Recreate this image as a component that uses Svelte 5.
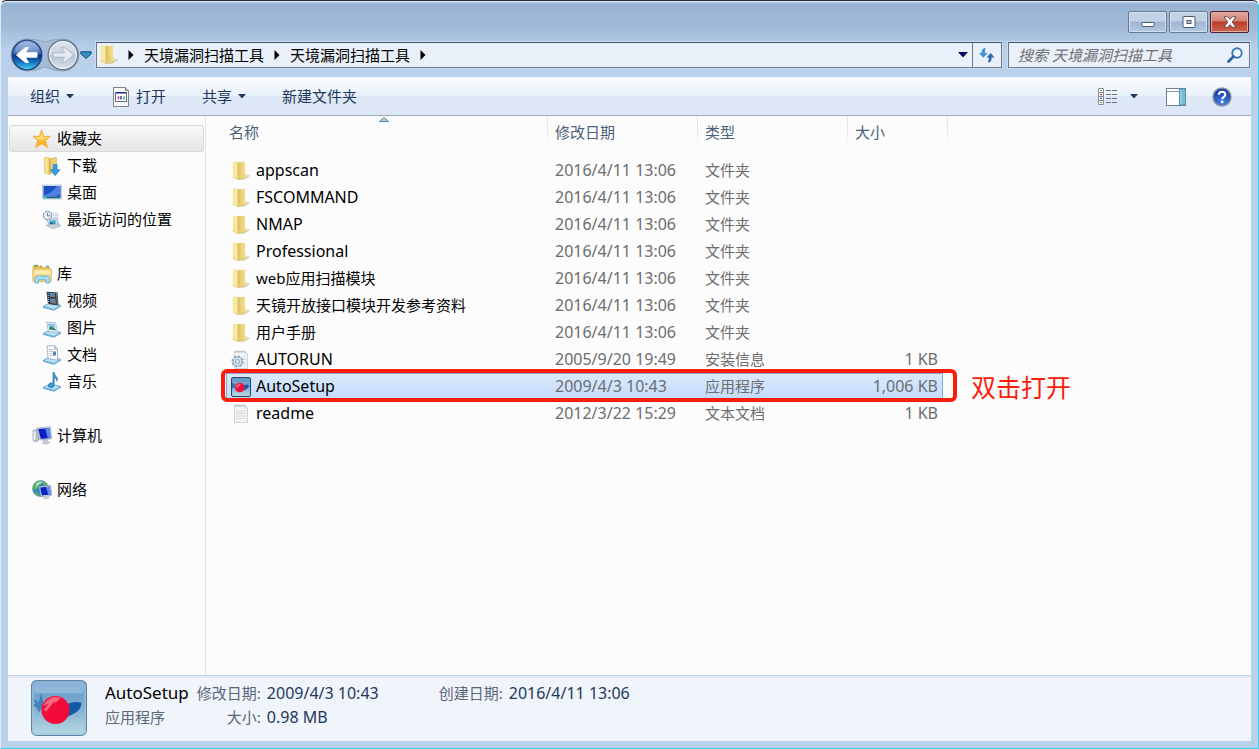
<script>
  const crumbs = ['天境漏洞扫描工具', '天境漏洞扫描工具'];

  const groups = [
    {
      label: '收藏夹', icon: 'star', active: true,
      items: [
        { label: '下载', icon: 'download' },
        { label: '桌面', icon: 'desktop' },
        { label: '最近访问的位置', icon: 'recent' }
      ]
    },
    {
      label: '库', icon: 'library',
      items: [
        { label: '视频', icon: 'video' },
        { label: '图片', icon: 'picture' },
        { label: '文档', icon: 'document' },
        { label: '音乐', icon: 'music' }
      ]
    },
    { label: '计算机', icon: 'computer', items: [] },
    { label: '网络', icon: 'network', items: [] }
  ];

  const folder = (name) => ({ name, icon: 'folder', date: '2016/4/11 13:06', type: '文件夹', size: '' });

  const files = [
    folder('appscan'),
    folder('FSCOMMAND'),
    folder('NMAP'),
    folder('Professional'),
    folder('web应用扫描模块'),
    folder('天镜开放接口模块开发参考资料'),
    folder('用户手册'),
    { name: 'AUTORUN', icon: 'config', date: '2005/9/20 19:49', type: '安装信息', size: '1 KB' },
    { name: 'AutoSetup', icon: 'app', date: '2009/4/3 10:43', type: '应用程序', size: '1,006 KB', note: '双击打开' },
    { name: 'readme', icon: 'text', date: '2012/3/22 15:29', type: '文本文档', size: '1 KB' }
  ];

  const isLatin = (text) => /^[\x20-\x7e]+$/.test(text);

  let selected = $state('AutoSetup');
  let query = $state('');
</script>

{#snippet base()}
  <path d="M1 15.500l7-3.500 11 2.500-7 4z" fill="#b9e0f2" stroke="#4f9cc8" stroke-width=".8" />
  <path d="M1 15.800v1l11 3 7-4.300v-1l-7 4.200z" fill="#5ba6cf" />
{/snippet}

{#snippet monitor()}
  <path d="M5 2 18.500.8 19.500 12.800 8 14z" fill="#d5dbe3" stroke="#8a93a3" stroke-width=".6" />
  <path d="M6.200 2.900 17.700 1.900 18.500 11.900 8.800 12.900z" fill="#0a1ec2" />
  <path d="M13 2.300 17.700 1.900 18.500 11.900 15.800 12.200z" fill="#5c86ee" />
  <path d="M11 14l4-.6 1 2.300 2 .8-3 1.800-5-.8 1.700-1.400z" fill="#c2c8d0" stroke="#a1a8b2" stroke-width=".4" />
{/snippet}

{#snippet icon(name)}
  <svg class="icon" viewBox="0 0 20 20" aria-hidden="true">
    {#if name === 'folder'}
      <path d="M8 18.500l6-4 4.500-.5q.5 1.500-1.500 2.500l-5 2.500z" fill="#a9abb3" opacity=".5" />
      <path d="M6 1.300 14 .8V13l1.800.6v2.700L7.500 18.800z" fill="url(#leaf)" />
      <path d="M1.800 1.300Q3 .2 4.500.2L7 1.500v17.300L2.300 16.500q-.5-.3-.5-.8z" fill="#f7e8a0" />
      <path d="M7 2v16.500" stroke="#d3b75d" stroke-width=".8" opacity=".8" />
      <path d="M2.200 15.500v.8L7 18.700l8.500-2.500" fill="none" stroke="#dfc15a" stroke-width=".7" />
    {:else if name === 'star'}
      <path d="M9.500 1 12 7.500 18.500 7.200 13.600 11.600 15.500 18.800 9.700 14.800 3.600 18.600 5.600 11.400 1 7.200 7.500 7.200z" fill="#fdb72f" stroke="#f0a030" stroke-width=".7" stroke-linejoin="round" />
      <path d="M9.500 2.500 11.300 8.500 17 8 11.500 10.500 6 10.500 3 8 8 8.300z" fill="#ffe68a" opacity=".8" />
    {:else if name === 'download'}
      <path d="M2 2 6.500 1l1 2v15.500l-5-1.500z" fill="#f6e294" stroke="#d9bf64" stroke-width=".6" />
      <path d="M7 2.500l7.500-1V15L7 18.500z" fill="#eccf70" stroke="#d3b65c" stroke-width=".6" />
      <path d="M8 3v14.500" stroke="#c7a94f" stroke-width="1.200" />
      <path d="M11.300 8.500h3.800v5.200h2.900l-4.800 6-4.800-6h2.900z" fill="#319ee6" stroke="#1877bd" stroke-width=".6" />
    {:else if name === 'desktop'}
      <rect x=".6" y="2" width="18.800" height="14" fill="#d9e6f1" stroke="#a9bfd3" stroke-width=".7" />
      <rect x="1.500" y="3" width="17" height="10.800" fill="#1d4ec6" />
      <path d="M1.500 12.500Q10 10 15 3h3.500v8L12 13.800H1.500z" fill="#5f93ea" opacity=".75" />
      <rect x="1.500" y="13.800" width="17" height="1.500" fill="#1b6783" />
      <rect x="1.500" y="13.200" width="3" height="2" fill="#43c6a9" />
    {:else if name === 'recent'}
      <path d="M9 3l7 .8-.5 9L9 12z" fill="#f3f5f7" stroke="#aab2bd" stroke-width=".6" />
      <path d="M11 5.500l4 .4M11 7.500l4 .4" stroke="#9dafc1" stroke-width=".6" />
      <circle cx="5.500" cy="5.500" r="4.200" fill="#e5eef5" stroke="#8495a6" stroke-width="1" />
      <path d="M5.500 3v2.800H8" fill="none" stroke="#4a6277" stroke-width=".8" />
      <path d="M5 9.500l9.500-.5 2 5-9.500.8z" fill="#f5fbff" stroke="#7c99b2" stroke-width=".7" />
      <path d="M6.500 10.500 13.500 10l1.200 3-7 .8z" fill="#59b4dc" />
      <path d="M7 14l2.500-2 5 1.500-6.500.5z" fill="#255f98" />
      <path d="M4 15.200 17 14l2 1.800-8 3.200z" fill="#cbd2d9" stroke="#9aa4ae" stroke-width=".6" />
    {:else if name === 'library'}
      <path d="M1 3q0-1 1-1h5l1 1.300h9.500v14H1z" fill="#e8c45c" stroke="#c79f3e" stroke-width=".6" />
      <path d="M2 1.600h4" stroke="#3db04b" stroke-width="1.400" />
      <path d="M7.500 2.200h4" stroke="#f2f2ea" stroke-width="1.300" />
      <path d="M8 2.400h1.500" stroke="#d84f3a" stroke-width="1.300" />
      <path d="M14 2.200h3" stroke="#4aa0e2" stroke-width="1.300" />
      <path d="M1 5h18.500v12.500H1z" fill="#f7dc83" stroke="#d7b352" stroke-width=".6" />
      <path d="M2 6.500h16.500v3.500H2z" fill="#fceeb5" opacity=".8" />
      <path d="M3 19v-4.500q0-2.500 2.500-2.500h9.500q2.500 0 2.500 2.500V19h-3.500v-3.200H6.500V19z" fill="#a7def4" stroke="#57a8cf" stroke-width=".8" />
    {:else if name === 'video'}
      {@render base()}
      <path d="M4.500.8 15.500 1.500 16.500 14.500 6 13z" fill="#28343e" />
      <path d="M7.500 1.800 13 2.200 13.300 6.200 7.700 5.800zM7.900 7.200 13.500 7.700 14 12.700 8.400 12z" fill="#4d8ec0" />
      <path d="M9 5.800l2-2 2.200 2.400zM9 11.800l2-2.800 2.600 3.500z" fill="#c85f38" />
      <path d="M6 2 6.700 12.500M14.500 2.500l.9 11" stroke="#dbe3e9" stroke-width=".9" stroke-dasharray="1 1" />
    {:else if name === 'picture'}
      {@render base()}
      <path d="M4.500 4 13.500 4.800 15.500 14.500 6.500 13.500z" fill="#f7fbfd" stroke="#91a6b8" stroke-width=".7" />
      <path d="M6 5.500 12.600 6.100 13.800 12.400 7.400 11.600z" fill="#7cc2e6" />
      <path d="M7 9.500l2.500-1 3.800 2.800.5 1.100-6.400-.8z" fill="#3e8468" />
    {:else if name === 'document'}
      {@render base()}
      <path d="M5 .8h7.500L15.500 4v11.200L6 13.500z" fill="#fafcfe" stroke="#8d99ac" stroke-width=".7" />
      <path d="M12.500.8v3.500h3z" fill="#cdd6e1" stroke="#8d99ac" stroke-width=".5" />
      <path d="M7 4.500h4M7 6.500h7M7.500 8.500h3M7.500 10.500h3" stroke="#9ba9bf" stroke-width=".7" />
      <rect x="11" y="7" width="3" height="3.500" fill="#557fba" />
    {:else if name === 'music'}
      {@render base()}
      <path d="M11 .5h1.200q.3 2.800 2.500 4.500 1.500 1.600.2 4.300.2-2.500-2.700-3.700V12.500q-.2 3.300-3.300 3.300-2.900-.2-2.600-2.800.7-2.500 4.700-2.200z" fill="#3a9bd3" stroke="#1f6da6" stroke-width=".6" />
    {:else if name === 'computer'}
      <path d="M1 4.500 5 3.500 7 14 3.500 16 1 14.500z" fill="#b9c0ca" stroke="#818b99" stroke-width=".6" />
      <path d="M1.500 5.500l2-.4v9.500l-2-.6z" fill="#eef1f5" />
      {@render monitor()}
    {:else if name === 'network'}
      <circle cx="8.500" cy="8.500" r="8" fill="#2f88c8" stroke="#4f8aa7" stroke-width=".5" />
      <path d="M2 5Q5 0 10 .8L8.500 4 6 5l-.5 3L3 10.500.8 8.500zM11 1.500l3.500 1.500 1.500 3-4-.5zM3 12l3.500 1 1 3.200Q4 15.500 3 12z" fill="#62b846" />
      <path d="M4 3.500Q8 .5 12 2 7 3.500 4.500 8z" fill="#e4f8e7" opacity=".6" />
      <path d="M7 6.500 18.800 5.500 19.700 15.500 9 16.800z" fill="#d9dee5" stroke="#8792a3" stroke-width=".6" />
      <path d="M8.100 7.500 17.900 6.600 18.600 14.500 9.800 15.600z" fill="#0d22bf" />
      <path d="M14 7l3.900-.4.700 7.900-2.300.3z" fill="#608cef" />
      <path d="M12.500 16.500l3.500-.5 2 2-4 1.500-3.500-.8z" fill="#c9ced5" />
    {:else if name === 'config' || name === 'text'}
      <path d="M3.500 1.500h10.800L16.500 4v14.500h-13z" fill="#f1f3f5" stroke="#c3c9cf" stroke-width=".8" />
      <path d="M4.500.5v2.500M6.700.5v2.500M8.900.5v2.500M11.100.5v2.500M13.300.5v2.500" stroke="#b1b7be" stroke-width=".9" />
      <path d="M14 1.800v2.700h2.500z" fill="#d5dbe1" />
      <path d="M5 7h10M5 9.500h10M5 12h10M5 14.500h10" stroke="#d5dfe6" stroke-width="1" />
      {#if name === 'config'}
        <circle cx="6.500" cy="11.500" r="4.500" fill="#dce9f3" stroke="#86a6c1" stroke-width="1.200" />
        <circle cx="6.500" cy="11.500" r="5.400" fill="none" stroke="#86a6c1" stroke-width="1.400" stroke-dasharray="2 2.240" />
        <circle cx="6.500" cy="11.500" r="2" fill="#fff" stroke="#7595b0" stroke-width="1" />
      {/if}
    {:else if name === 'app'}
      <rect x=".5" y=".5" width="19" height="19" rx="1.500" fill="url(#appfill)" stroke="#2b4460" />
      <path d="M1 6l3 1.200L3.500 10l1.500 1.500L1 11z" fill="#2a5fa2" opacity=".8" />
      <path d="M12 9Q15.500 6.500 18 8.500q0 2.500-5 5z" fill="#175ba4" />
      <circle cx="8.800" cy="10.500" r="4.800" fill="#f2103b" />
      <path d="M5 9l3-2.500 2 .5-4 4.500z" fill="#f58397" opacity=".75" />
    {/if}
  </svg>
{/snippet}

{#snippet caret()}
  <svg class="caret" viewBox="0 0 8 5" aria-hidden="true"><path d="M0 0h8L4 4.500z" fill="currentColor" /></svg>
{/snippet}

{#snippet next()}
  <svg class="next" viewBox="0 0 6 10" aria-hidden="true"><path d="M.5 0v10L5.500 5z" fill="#000" /></svg>
{/snippet}

<svg class="defs" aria-hidden="true">
  <defs>
    <linearGradient id="leaf" x1="0" y1="0" x2="1" y2="0">
      <stop offset="0" stop-color="#d2b65c" /><stop offset=".45" stop-color="#ecd47c" /><stop offset="1" stop-color="#f5e08c" />
    </linearGradient>
    <linearGradient id="appfill" x1="0" y1="0" x2="0" y2="1">
      <stop offset="0" stop-color="#5f95c8" /><stop offset=".5" stop-color="#82aed0" /><stop offset="1" stop-color="#b9dbe4" />
    </linearGradient>
    <linearGradient id="backfill" x1="0" y1="0" x2="0" y2="1">
      <stop offset="0" stop-color="#8fb0e2" /><stop offset=".46" stop-color="#3a66b8" />
      <stop offset=".5" stop-color="#0b2f83" /><stop offset=".75" stop-color="#1774c0" /><stop offset="1" stop-color="#45d9f6" />
    </linearGradient>
    <linearGradient id="fwdfill" x1="0" y1="0" x2="0" y2="1">
      <stop offset="0" stop-color="#dfe6ee" /><stop offset=".48" stop-color="#c9d3df" />
      <stop offset=".52" stop-color="#b7c4d4" /><stop offset="1" stop-color="#dbe4ee" />
    </linearGradient>
    <radialGradient id="helpfill" cx=".5" cy=".85" r=".8">
      <stop offset="0" stop-color="#4a86ea" /><stop offset="1" stop-color="#16339f" />
    </radialGradient>
  </defs>
</svg>

<div class="window">
  <header class="caption">
    <button class="win" aria-label="最小化">
      <svg viewBox="0 0 14 12"><rect x="1" y="6.500" width="12" height="4" rx=".5" fill="#fff" stroke="#4f5d6f" /></svg>
    </button>
    <button class="win" aria-label="最大化">
      <svg viewBox="0 0 14 12"><rect x="1" y=".5" width="12" height="11" rx=".5" fill="#fff" stroke="#4f5d6f" /><rect x="5" y="4.500" width="4" height="3" fill="#b5c6da" stroke="#4f5d6f" /></svg>
    </button>
    <button class="win close" aria-label="关闭">
      <svg viewBox="0 0 14 12"><path d="M1 .8h3.800L7 3.300 9.200.8H13L9.200 6l3.800 5.200H9.200L7 8.700l-2.200 2.500H1L4.800 6z" fill="#fff" stroke="#5a4048" stroke-width=".9" /></svg>
    </button>
  </header>

  <nav class="navbar" aria-label="导航">
    <div class="travel">
      <svg class="pill" viewBox="0 0 70 34" aria-hidden="true">
        <path d="M17 1Q26 1 35 4 44 1 53 1a16 16 0 0 1 0 32Q44 33 35 29 26 33 17 33A16 16 0 0 1 17 1z" fill="#a4bcd8" stroke="#8ba5c2" />
      </svg>
      <button class="round" aria-label="后退">
        <svg viewBox="0 0 32 32">
          <circle cx="16" cy="16" r="14.800" fill="url(#backfill)" stroke="#22427c" stroke-width="1.300" />
          <path d="M4 13Q5 3 16 3t12 10Q16 18 4 13z" fill="#fff" opacity=".22" />
          <path d="M5.500 16 14.500 8.500h3L14.300 13.800H26v4.400H14.300l3.200 5.300h-3z" fill="#fff" stroke="#fff" stroke-width="1" stroke-linejoin="round" />
        </svg>
      </button>
      <button class="round" aria-label="前进">
        <svg viewBox="0 0 32 32">
          <circle cx="16" cy="16" r="14.800" fill="url(#fwdfill)" stroke="#6d7a8a" stroke-width="1.400" />
          <circle cx="16" cy="16" r="13.500" fill="none" stroke="#f0f5fa" />
          <path d="M26.500 16 17.500 8.500h-3l3.200 5.300H6v4.400h11.700l-3.200 5.300h3z" fill="#e6ebf1" stroke="#a5b0bd" stroke-width=".8" stroke-linejoin="round" />
        </svg>
      </button>
    </div>
    <button class="history" aria-label="最近浏览的页面">
      <svg viewBox="0 0 12 8"><path d="M.8.800h10.400v2L6 7.400.8 2.800z" fill="#2c90c4" stroke="#1b4b75" /></svg>
    </button>

    <div class="address">
      {@render icon('folder')}
      {@render next()}
      {#each crumbs as crumb}
        <button class="crumb">{crumb}</button>
        {@render next()}
      {/each}
      <button class="drop" aria-label="以前的位置">
        <svg viewBox="0 0 10 6"><path d="M0 0h10L5 5.500z" fill="#000a62" /></svg>
      </button>
      <button class="refresh" aria-label="刷新">
        <svg viewBox="0 0 18 16">
          <path d="M6.500 1Q3.600 2 3.600 6H1l4.300 4.800L9.500 6H6.800q-.2-3 1-4.700z" fill="#3b91d8" />
          <path d="M11 15.500q2.600-.5 2.600-5h2.800L12.700 6 8.500 10.500h2.400q.2 3-1 4.600z" fill="#2b67b4" />
        </svg>
      </button>
    </div>

    <label class="search">
      <input type="text" aria-label="搜索" placeholder="搜索 天境漏洞扫描工具" bind:value={query} />
      <svg viewBox="0 0 16 16" aria-hidden="true">
        <circle cx="10" cy="6" r="4.700" fill="#f0f7fd" stroke="#3578bb" stroke-width="1.900" />
        <path d="M6.500 9.500 1.500 14.500" stroke="#2b5d9c" stroke-width="2.600" stroke-linecap="round" />
      </svg>
    </label>
  </nav>

  <div class="client">
    <div class="toolbar" role="toolbar" aria-label="命令栏">
      <button class="cmd">组织 {@render caret()}</button>
      <button class="cmd open">
        <svg class="sheet" viewBox="0 0 18 20" aria-hidden="true">
          <path d="M1.500.500h12L16.500 3.500v16h-15z" fill="#f7f8fa" stroke="#7d838b" />
          <path d="M13.500.500v3h3" fill="#d3d8df" stroke="#7d838b" />
          <rect x="3.500" y="5.500" width="11" height="9" fill="#fff" stroke="#67707c" />
          <rect x="4" y="5" width="10" height="1.500" fill="#1d2b9a" />
          <path d="M6.500 9.500v3M5.500 10h2" stroke="#c0325a" stroke-width="1.200" />
          <path d="M9 9v3.500" stroke="#3c46c0" stroke-width="1.600" />
          <path d="M12 9.500v3" stroke="#2a9a58" stroke-width="1.400" />
        </svg>
        打开
      </button>
      <button class="cmd share">共享 {@render caret()}</button>
      <button class="cmd">新建文件夹</button>
      <div class="tools">
        <button class="tool" aria-label="更改您的视图">
          <svg width="20" height="18" viewBox="0 0 20 18">
            <path d="M.5.500h5v4h-5zM.5 4.500h5v4h-5zM.5 8.500h5v4h-5zM.5 12.500h5v4h-5z" fill="#fff" stroke="#848e9b" />
            <path d="M2 2.500h2" stroke="#4e9f63" /><path d="M2 6.500h2" stroke="#e0432f" stroke-width="1.500" />
            <path d="M2 10.500h2" stroke="#3575c4" stroke-width="1.500" /><path d="M2 14.500h2" stroke="#8ab52c" stroke-width="1.500" />
            <path d="M8 2.500h5M14 2.500h5M8 6.500h5M14 6.500h5M8 10.500h5M14 10.500h5M8 14.500h5M14 14.500h5" stroke="#68727e" />
          </svg>
        </button>
        <button class="tool more" aria-label="更多选项">{@render caret()}</button>
        <button class="tool pane" aria-label="显示预览窗格">
          <svg width="20" height="18" viewBox="0 0 20 18">
            <rect x=".5" y=".5" width="19" height="17" fill="#fff" stroke="#6d8096" />
            <path d="M1 3.500h13" stroke="#8598ab" />
            <rect x="13.500" y="1" width="6" height="16" fill="#78bdd8" stroke="#4f93b5" />
            <path d="M15 2v14" stroke="#a9dbec" />
          </svg>
        </button>
        <button class="tool" aria-label="获取帮助">
          <svg width="20" height="20" viewBox="0 0 20 20">
            <circle cx="10" cy="10" r="9" fill="url(#helpfill)" stroke="#8b93a3" stroke-width="1.500" />
            <path d="M6.800 7.800Q6.900 4.800 10 4.700q3.300.1 3.300 2.800 0 1.500-1.500 2.500-1.500.9-1.500 2.200" fill="none" stroke="#fff" stroke-width="2.100" />
            <circle cx="10.200" cy="14.900" r="1.300" fill="#fff" />
          </svg>
        </button>
      </div>
    </div>

    <div class="body">
      <aside class="tree">
        {#each groups as group}
          <ul>
            <li><a href="#top" class="node" class:active={group.active}>{@render icon(group.icon)}{group.label}</a></li>
            {#each group.items as item}
              <li><a href="#top" class="node child">{@render icon(item.icon)}{item.label}</a></li>
            {/each}
          </ul>
        {/each}
      </aside>

      <main class="list">
        <table>
          <colgroup><col class="c-name" /><col class="c-date" /><col class="c-type" /><col class="c-size" /></colgroup>
          <thead>
            <tr>
              <th>
                <button class="head">名称</button>
                <svg class="sort" viewBox="0 0 10 5" aria-hidden="true"><path d="M.5 4.500 5 .500l4.500 4z" fill="#a6d3ea" stroke="#3f6e90" stroke-width=".8" /></svg>
              </th>
              <th><button class="head">修改日期</button></th>
              <th><button class="head">类型</button></th>
              <th><button class="head last">大小</button></th>
            </tr>
          </thead>
          <tbody>
            {#each files as file}
              <tr class:selected={selected === file.name} onclick={() => (selected = file.name)}>
                <td class="name" class:latin={isLatin(file.name)}><span>{@render icon(file.icon)}{file.name}</span></td>
                <td class="latin">{file.date}</td>
                <td>{file.type}</td>
                <td class="size latin">
                  {file.size}
                  {#if file.note}
                    <span class="mark"><em>{file.note}</em></span>
                  {/if}
                </td>
              </tr>
            {/each}
          </tbody>
        </table>
      </main>
    </div>

    <footer class="details">
      <svg class="big" viewBox="0 0 56 56" aria-hidden="true">
        <rect x=".5" y=".5" width="55" height="55" rx="5" fill="url(#appfill)" stroke="#5f819f" />
        <rect x="3" y="2.500" width="50" height="11" rx="4" fill="#a9cbe6" opacity=".55" />
        <rect x="2" y="2" width="52" height="52" rx="4" fill="none" stroke="#9dc6dd" opacity=".6" stroke-width="2" />
        <path d="M1.500 19q4.500 1 6 4l3-10 1.500 9 6 2-7 3-3 6q-1-6-6-7.500l3-2.500z" fill="#2c6cb0" opacity=".7" />
        <path d="M33 26q8-5.500 17-3.500 2 8-14 14.500z" fill="#155aa5" />
        <circle cx="24.500" cy="30" r="14" fill="#f30b3a" />
        <path d="M12 26q3-7 11-9l7 .5-5 5-2.500-.3-7.500 9.500-2-2.200 5-6z" fill="#f58fa2" opacity=".7" />
      </svg>
      <div class="title">
        <strong>AutoSetup</strong>
        <span>应用程序</span>
      </div>
      <dl>
        <dt>修改日期:</dt><dd>2009/4/3 10:43</dd>
        <dt>大小:</dt><dd>0.98 MB</dd>
      </dl>
      <dl class="created">
        <dt>创建日期:</dt><dd>2016/4/11 13:06</dd>
      </dl>
    </footer>
  </div>
</div>

<style>
  :global(body) {
    font-family: "Noto Sans", "Noto Sans CJK SC", sans-serif;
    font-size: 15px;
    line-height: 27px;
    color: #000;
  }
  .defs { position: absolute; width: 0; height: 0; }
  button {
    font: inherit;
    color: inherit;
    background: none;
    border: 0;
    padding: 0;
    cursor: default;
  }
  svg { display: block; flex: none; }
  .icon { width: 20px; height: 20px; }

  .window {
    box-sizing: border-box;
    min-height: 100vh;
    display: flex;
    flex-direction: column;
    padding: 0 7px 7px;
    border: 1px solid #35d3ea;
    border-top-color: #252b38;
    border-left-color: #dfe9f5;
    border-radius: 6px 6px 0 0;
    background: linear-gradient(#c4d7ec 0, #98b3d2 3px, #a1bad8 26px, #b9d1eb 50px, #b9d1ea 100%);
    box-shadow: inset 0 1px #dce8f5;
  }
  .caption {
    display: flex;
    justify-content: flex-end;
    gap: 2px;
    padding: 10px 2px 6px;
  }
  .win {
    display: grid;
    place-items: center;
    width: 39px;
    height: 22px;
    border: 1px solid #667990;
    border-radius: 2px;
    background: linear-gradient(#c2d2e6 0 45%, #9eb6d3 50%, #b3cae4);
    box-shadow: inset 0 0 0 1px #d3e0ef;
  }
  .win svg { width: 14px; height: 12px; }
  .win.close {
    border-color: #50202a;
    background: linear-gradient(#e0a197 0 10%, #d47f70 45%, #b93c26 50%, #cf6650);
    box-shadow: inset 0 0 0 1px #e3aaa0;
  }

  .navbar {
    display: flex;
    align-items: center;
    height: 32px;
    padding: 0 1px 6px 2px;
  }
  .travel { position: relative; display: flex; gap: 4px; padding: 0 1px; }
  .pill { position: absolute; left: 0; top: -1px; width: 70px; height: 34px; }
  .round, .round svg { position: relative; width: 32px; height: 32px; }
  .history { padding: 0 4px 0 0; }
  .history svg { width: 12px; height: 8px; }
  .address, .search {
    box-sizing: border-box;
    display: flex;
    align-items: center;
    height: 26px;
    border: 1px solid #6c7c90;
    border-top-color: #46566b;
    background: #e9f0f9;
    box-shadow: 0 0 0 1px #cbdcf0;
  }
  .address { flex: 1; min-width: 0; padding-left: 2px; }
  .next { width: 6px; height: 10px; margin: 0 10px; }
  .address .icon + .next { margin-left: 9px; }
  .crumb { color: #000; line-height: 24px; white-space: nowrap; }
  .drop { margin-left: auto; padding: 8px 4px; }
  .drop svg { width: 10px; height: 6px; }
  .refresh { border-left: 1px solid #6c7c90; padding: 4px 5px; }
  .refresh svg { width: 18px; height: 16px; }
  .search { width: 242px; margin-left: 6px; padding: 0 6px 0 9px; }
  .search input {
    flex: 1;
    min-width: 0;
    padding: 0;
    border: 0;
    outline: 0;
    background: none;
    font: inherit;
    line-height: 24px;
    height: 24px;
  }
  .search input::placeholder { color: #6f7177; font-style: italic; opacity: 1; }
  .search svg { width: 16px; height: 16px; }

  .client { flex: 1; display: flex; flex-direction: column; background: #fcfcfc; }
  .toolbar {
    display: flex;
    align-items: center;
    height: 37px;
    padding: 0 19px 0 22px;
    color: #1e395b;
    background: linear-gradient(#fafcfe, #e9f1fb 49%, #dde7f5 50%, #dce6f4);
    border-top: 1px solid #f5f9fd;
    border-bottom: 1px solid #a0afc7;
    box-sizing: content-box;
    white-space: nowrap;
  }
  .cmd { display: flex; align-items: center; gap: 6px; }
  .caret { width: 8px; height: 5px; }
  .open { margin: 0 36px 0 38px; }
  .share { margin-right: 36px; }
  .sheet { width: 18px; height: 20px; }
  .tools { display: flex; align-items: center; margin-left: auto; }
  .more { margin-left: 12px; }
  .pane { margin: 0 26px 0 28px; }

  .body { flex: 1; display: flex; }
  .tree {
    box-sizing: border-box;
    width: 198px;
    padding: 9px 1px 0;
    border-right: 1px solid #d9e5f2;
  }
  ul { list-style: none; margin: 0 0 27px; padding: 0; }
  .node {
    box-sizing: border-box;
    display: flex;
    align-items: center;
    gap: 5px;
    height: 27px;
    padding-left: 23px;
    color: #000;
    text-decoration: none;
    white-space: nowrap;
  }
  .node.child { padding-left: 33px; }
  .node.active {
    padding-left: 22px;
    border: 1px solid #d9d9d9;
    border-radius: 3px;
    background: linear-gradient(#f8f8f8, #e6e6e6);
  }

  .list { flex: 1; min-width: 0; padding-left: 20px; }
  table { table-layout: fixed; width: 717px; border-collapse: collapse; }
  .c-name { width: 322px; }
  .c-date, .c-type { width: 150px; }
  .c-size { width: 95px; }
  th { position: relative; padding: 0 0 14px; font-weight: 400; }
  .head {
    display: block;
    width: 100%;
    height: 27px;
    padding: 6px 0 0 7px;
    line-height: 21px;
    text-align: left;
    color: #4c607a;
    border-right: 1px solid;
    border-image: linear-gradient(#d5e2f2, #e5edf6 70%, #fcfcfc) 1;
  }
  th:first-child .head { padding-left: 3px; }
  .head.last { width: 100px; }
  .sort { position: absolute; left: 153px; top: 1px; width: 10px; height: 5px; }
  td { height: 27px; padding: 0 0 0 7px; color: #6d6d6d; white-space: nowrap; }
  td.name { padding-left: 5px; color: #000; }
  td.latin { font-size: 16px; }
  td.name span { display: flex; align-items: center; gap: 5px; }
  td.size { padding: 0 5px 0 0; text-align: right; }
  tbody tr { position: relative; }
  tr.selected {
    background: linear-gradient(#dcebfc, #c1dbfc);
    box-shadow: inset 0 0 0 1px #84a7d1;
  }
  .mark {
    position: absolute;
    inset: -4px -14px -2px -5px;
    border: 4px solid #fc1c0c;
    border-radius: 6px;
    pointer-events: none;
  }
  .mark em {
    position: absolute;
    left: 100%;
    top: 0;
    margin: 2px 0 0 18px;
    font-style: normal;
    font-size: 25px;
    line-height: 25px;
    color: #fc1c0c;
  }

  .details {
    box-sizing: border-box;
    display: flex;
    height: 66px;
    padding: 4px 23px 0;
    background: #f0f4fb;
    border-top: 1px solid #c3d3e8;
    box-shadow: inset 0 2px #e1e9f4;
    color: #5a6779;
    line-height: 24px;
    white-space: nowrap;
  }
  .big { width: 56px; height: 56px; }
  .title { display: flex; flex-direction: column; margin: 1px 8px 0 18px; }
  .title strong { font-weight: 400; font-size: 17px; color: #000; }
  dl {
    display: grid;
    grid-template-columns: auto auto;
    align-content: start;
    align-items: baseline;
    column-gap: 6px;
    margin: 1px 0 0;
  }
  dt { text-align: right; }
  dd { margin: 0; font-size: 16px; color: #1e395b; }
  .created { margin-left: 60px; }
</style>
